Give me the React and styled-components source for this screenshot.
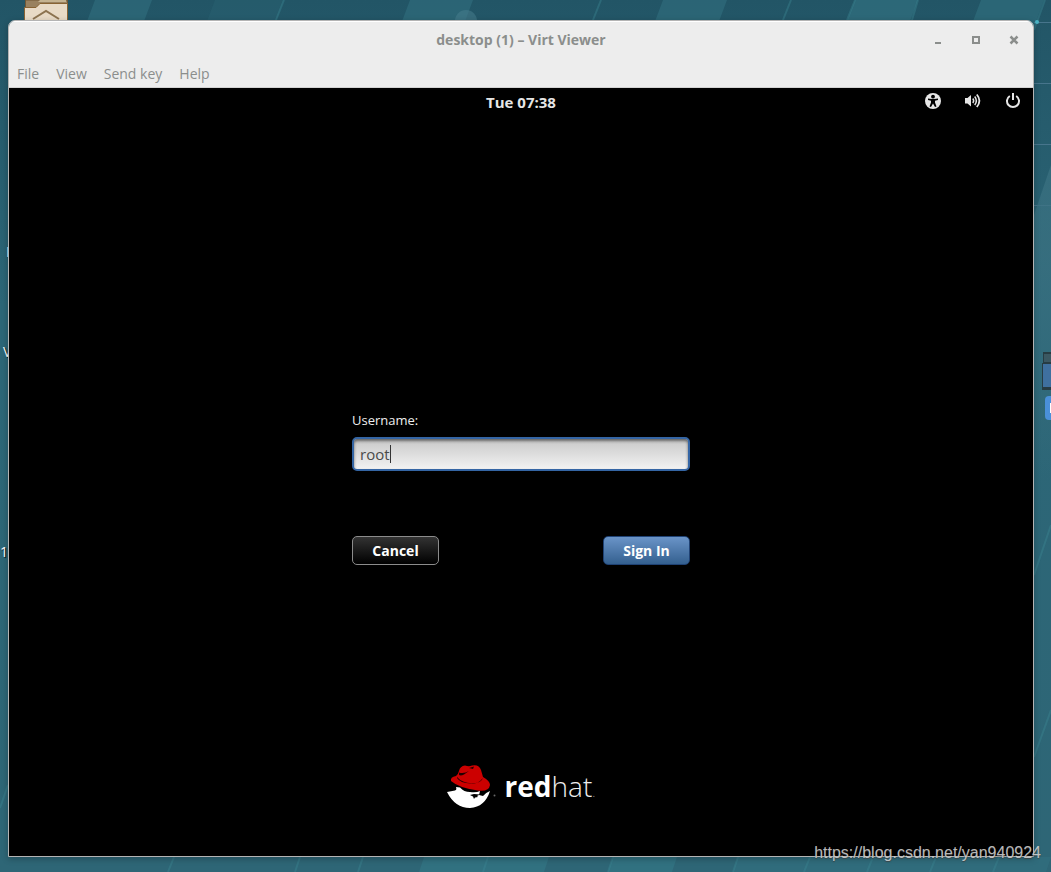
import React from "react"
import styled, { createGlobalStyle, css } from "styled-components"

const GlobalStyle = createGlobalStyle`
  html {
    height: 100%;
  }

  body {
    margin: 0;
    height: 100%;
    font-family: "Open Sans", "Noto Sans", sans-serif;
    background: #2a6272;
  }

  #root {
    height: 100%;
  }
`
const Desktop = styled.div`
  position: relative;
  display: flex;
  min-height: 100%;
  padding: 20px 17px 15px 8px;
  box-sizing: border-box;
  overflow: hidden;
`
const Wallpaper = styled.svg`
  position: absolute;
  top: 0;
  left: 0;
  width: 100%;
  height: 100%;
`
const HomeFolder = styled.svg`
  position: absolute;
  top: 0;
  left: 24px;
`
const MonitorIcon = styled.svg`
  position: absolute;
  top: 350px;
  right: 0;
`
const DesktopLabel = styled.span`
  position: absolute;
  top: ${(props) => props.$top}px;
  left: ${(props) => props.$left}px;
  font-size: 14px;
  line-height: 20px;
  color: #fff;
  text-shadow: 1px 1px 1px #000;
`
const Window = styled.main`
  position: relative;
  flex: 1;
  display: flex;
  flex-direction: column;
  border: 1px solid #b4b4b4;
  border-radius: 7px 7px 0 0;
  overflow: hidden;
  box-shadow: 0 2px 6px rgba(0, 0, 0, 0.25);
`
const TitleBar = styled.header`
  display: grid;
  grid-template-columns: 1fr auto 1fr;
  align-items: center;
  height: 38px;
  padding: 0 10px;
  background: #ededed;
  box-shadow: inset 0 1px #fff;
`
const Title = styled.h1`
  grid-column: 2;
  margin: 0;
  font-size: 14px;
  line-height: 20px;
  font-weight: 700;
  color: #8b8e8c;
`
const WindowButtons = styled.div`
  display: flex;
  justify-content: flex-end;
  gap: 20px;
`
const WindowButton = styled.button`
  display: flex;
  width: 18px;
  height: 18px;
  padding: 0;
  border: 0;
  background: none;
  align-items: center;
  justify-content: center;
`
const MenuBar = styled.nav`
  display: flex;
  gap: 17px;
  height: 29px;
  padding: 2px 8px 0;
  box-sizing: border-box;
  background: #ededed;
  border-bottom: 1px solid #d3d3d3;
`
const MenuItem = styled.button`
  padding: 0;
  border: 0;
  background: none;
  font-family: inherit;
  font-size: 14px;
  line-height: 26px;
  color: #8b8e8c;
`
const Screen = styled.section`
  flex: 1;
  display: flex;
  flex-direction: column;
  background: #000;
`
const TopBar = styled.div`
  display: grid;
  grid-template-columns: 1fr auto 1fr;
  align-items: center;
  height: 26px;
  padding: 0 12px;
`
const Clock = styled.time`
  grid-column: 2;
  padding-top: 1px;
  font-size: 15px;
  line-height: 20px;
  font-weight: 700;
  color: #e6e6e6;
`
const StatusIcons = styled.div`
  display: flex;
  justify-content: flex-end;
  gap: 24px;
`
const StatusButton = styled.button`
  display: flex;
  padding: 0;
  border: 0;
  background: none;
`
const Login = styled.div`
  flex: 1;
  display: flex;
  align-items: center;
  justify-content: center;
  padding-top: 96px;
`
const LoginForm = styled.form`
  width: 338px;
`
const Label = styled.label`
  display: block;
  margin-bottom: 7px;
  font-size: 13px;
  line-height: 20px;
  color: #eee;
`
const Field = styled.div`
  position: relative;
  margin-bottom: 65px;
`
const Input = styled.input`
  display: block;
  width: 100%;
  height: 34px;
  padding: 0 6px;
  box-sizing: border-box;
  border: 2px solid #3465a4;
  border-radius: 5px;
  outline: 0;
  background: linear-gradient(#c8c8c8, #f2f2f2);
  box-shadow: inset 0 2px 3px rgba(0, 0, 0, 0.5);
  font-family: inherit;
  font-size: 15px;
  color: #4a4a4a;
  caret-color: transparent;
`
const Caret = styled.span`
  position: absolute;
  top: 8px;
  left: 38px;
  width: 1px;
  height: 18px;
  background: #333;
`
const Actions = styled.div`
  display: flex;
  justify-content: space-between;
`
const primary = css`
  border-color: #1f4274;
  background: linear-gradient(#6a94c8, #34608f);
`
const Button = styled.button`
  width: 87px;
  height: 29px;
  padding: 0;
  border: 1px solid #8c8c8c;
  border-radius: 5px;
  background: linear-gradient(#333, #000);
  font-family: inherit;
  font-size: 14px;
  font-weight: 700;
  color: #fff;
  ${(props) => props.$primary && primary}
`
const Brand = styled.footer`
  display: flex;
  align-items: center;
  justify-content: center;
  gap: 9px;
  padding-bottom: 48px;
  color: #fff;
`
const BrandName = styled.span`
  font-size: 28px;
  line-height: 44px;
  font-weight: 300;
  color: #eee;

  b {
    font-weight: 700;
    color: #fff;
  }

  small {
    font-size: 13px;
    line-height: 1;
    color: #999;
  }
`
const Watermark = styled.span`
  position: absolute;
  right: 10px;
  bottom: 9px;
  font-family: "Liberation Sans", Arial, sans-serif;
  font-size: 16px;
  line-height: 20px;
  color: rgba(215, 215, 215, 0.85);
  text-shadow: 0 1px 1px rgba(60, 60, 60, 0.8);
`

const menus = ["File", "View", "Send key", "Help"]

// slanted stripes: [left x, right x, opacity] measured at the top edge
const topStripes = [
  [95, 152, 0.5],
  [215, 284, 0.2],
  [410, 473, 0.5],
  [663, 727, 0.5],
  [855, 918, 0.6],
  [981, 1044, 0.55],
]
// same, measured at the bottom edge of the window
const bottomStripes = [
  [424, 549, 0.5],
  [613, 677, 0.5],
  [738, 1051, 0.3],
]

function App() {
  return (
    <Desktop>
      <GlobalStyle />
      <Wallpaper viewBox="0 0 1051 872" preserveAspectRatio="none" aria-hidden="true">
        <defs>
          <linearGradient id="sea" x1="0" y1="0" x2="0" y2="1">
            <stop offset="0" stopColor="#225566" />
            <stop offset="0.35" stopColor="#2c6677" />
            <stop offset="1" stopColor="#2e6676" />
          </linearGradient>
          <linearGradient id="glow" x1="0" y1="0" x2="0" y2="1">
            <stop offset="0.3" stopColor="#3b7282" stopOpacity="0.7" />
            <stop offset="1" stopColor="#3b7282" stopOpacity="0" />
          </linearGradient>
        </defs>
        <rect width="1051" height="872" fill="url(#sea)" />
        {topStripes.map(([a, b, o]) => (
          <path key={a} d={`M${a} 0H${b}L${b - 30} 80H${a - 30}Z`} fill="#337484" opacity={o} />
        ))}
        {bottomStripes.map(([a, b, o]) => (
          <path key={a} d={`M${a} 857H${b}L${b - 5} 872H${a - 5}Z`} fill="#347c8a" opacity={o} />
        ))}
        <circle cx="466" cy="21" r="11" fill="#4a8090" opacity="0.5" />
        <path
          d="M284 0L276 20M601 0L593 20M791 0L783 20M855 0L847 20M918 0L912 20M1045 0L1034 30M1051 525L1034 575M1051 710L1034 757M8 785L0 808M174 857L168 872M300 857L295 872M363 857L358 872M488 857L483 872M613 857L608 872M738 857L733 872M810 857L804 872M873 857L867 872M936 857L930 872M999 857L993 872"
          stroke="#3d8794"
          strokeWidth="2"
          opacity="0.4"
          fill="none"
        />
        <path d="M1034 22.500H1051M1034 83.500H1051M1034 144.500H1051M1034 205.500H1051" stroke="#47758c" />
        <path d="M1051 165V480H1034V215Z" fill="url(#glow)" />
        <circle cx="1037" cy="22" r="2" fill="#4ab3c4" />
      </Wallpaper>

      <HomeFolder width="45" height="22" aria-hidden="true">
        <path d="M1.500 0H43.500V10H1.500Z" fill="#99815f" stroke="#705734" />
        <path d="M16 0H42V2H14Z" fill="#c5b391" />
        <path d="M0.500 7.500H12L16 3.500H43.500V22H0.500Z" fill="#e8dac6" stroke="#886333" />
        <path d="M9 19L22 11L35 19" fill="none" stroke="#8c7350" strokeWidth="2" />
      </HomeFolder>
      <MonitorIcon width="10" height="72" aria-hidden="true">
        <path d="M2 2H10V40H1V13H2Z" fill="#273c43" />
        <path d="M3 4H10V12H3Z" fill="#3b5862" />
        <path d="M2 14H10V37H2Z" fill="#3f709f" />
        <rect x="4" y="46" width="16" height="24" rx="4" fill="#4a90d9" />
        <path d="M9 53H10V63H9Z" fill="#fff" />
      </MonitorIcon>
      <DesktopLabel $top={242} $left={6}>I</DesktopLabel>
      <DesktopLabel $top={342} $left={3}>V</DesktopLabel>
      <DesktopLabel $top={542} $left={0}>1</DesktopLabel>

      <Window>
        <TitleBar>
          <Title>desktop (1) – Virt Viewer</Title>
          <WindowButtons>
            <WindowButton type="button" aria-label="Minimize">
              <svg width="10" height="10">
                <path d="M2 7H8V9H2Z" fill="#8b8e8c" />
              </svg>
            </WindowButton>
            <WindowButton type="button" aria-label="Maximize">
              <svg width="10" height="10">
                <path d="M2 2H8V8H2Z" fill="none" stroke="#8b8e8c" strokeWidth="2" />
              </svg>
            </WindowButton>
            <WindowButton type="button" aria-label="Close">
              <svg width="10" height="10">
                <path d="M1.500 1.500L8.500 8.500M8.500 1.500L1.500 8.500" stroke="#8b8e8c" strokeWidth="2.500" />
              </svg>
            </WindowButton>
          </WindowButtons>
        </TitleBar>
        <MenuBar>
          {menus.map((name) => (
            <MenuItem key={name} type="button">{name}</MenuItem>
          ))}
        </MenuBar>

        <Screen>
          <TopBar>
            <Clock>Tue 07:38</Clock>
            <StatusIcons>
              <StatusButton type="button" aria-label="Accessibility">
                <svg width="16" height="16">
                  <circle cx="8" cy="8" r="8" fill="#e6e6e6" />
                  <circle cx="8" cy="3.700" r="1.900" fill="#000" />
                  <path d="M3 5.500L6.500 6H9.500L13 5.500V7L10 7.700V9.500L11.500 13.500L10 14L8 10.500L6 14L4.500 13.500L6 9.500V7.700L3 7Z" fill="#000" />
                </svg>
              </StatusButton>
              <StatusButton type="button" aria-label="Volume">
                <svg width="16" height="16" fill="none" stroke="#e6e6e6">
                  <path d="M0 5H2.500L6 2V13.500L2.500 10.500H0Z" fill="#e6e6e6" stroke="none" />
                  <path d="M7.800 5.500Q9.600 7.800 7.800 10" strokeWidth="1.500" />
                  <path d="M9.700 3.500Q13 7.800 9.700 12" strokeWidth="1.500" />
                  <path d="M11.800 1.500Q17 7.800 11.800 14" strokeWidth="1.800" />
                </svg>
              </StatusButton>
              <StatusButton type="button" aria-label="Power">
                <svg width="16" height="16" fill="none" stroke="#e6e6e6" strokeWidth="2">
                  <path d="M4.800 3A6 6 0 1 0 11.200 3" />
                  <path d="M8 0V7" />
                </svg>
              </StatusButton>
            </StatusIcons>
          </TopBar>

          <Login>
            <LoginForm onSubmit={(e) => e.preventDefault()}>
              <Label htmlFor="username">Username:</Label>
              <Field>
                <Input id="username" name="username" type="text" defaultValue="root" />
                <Caret />
              </Field>
              <Actions>
                <Button type="button">Cancel</Button>
                <Button type="submit" $primary>Sign In</Button>
              </Actions>
            </LoginForm>
          </Login>

          <Brand>
            <svg width="49" height="44" viewBox="0 0 49 44" aria-hidden="true">
              <path d="M0 28L8 26.500Q10 26 9 23L13 23.500Q17 28 23 28Q29 29 33 27L32 31L36 32Q38 29 43 27Q38 43 23 44Q8 44 0 28Z" fill="#fff" />
              <path d="M23 31L27 30L33 30.500L30 32L31 33L28 33.500L27 35L26 32.500Z" fill="#000" />
              <path d="M4 17Q3 13 9 12Q11 11 12 7Q13 2 18 1.500Q22 3 25 1.500Q32 0 34 6L36 13Q43 17 43 21Q42 28 31 26.500Q12 24 4 17Z" fill="#c00" />
              <path d="M12 8.500Q17 10 22 7L17 10.500Q14 12 12 11Z M22 4L27 2.500L26 5Z M10 13Q16 20 27 19Q34 19 36 14L35 15Q31 20 24 19.500Q13 19 10 14Z" fill="#200" />
              <circle cx="47.500" cy="31.500" r="1" fill="#666" />
            </svg>
            <BrandName><b>red</b>hat<small>.</small></BrandName>
          </Brand>
        </Screen>
      </Window>
      <Watermark>https://blog.csdn.net/yan940924</Watermark>
    </Desktop>
  )
}

export default App
